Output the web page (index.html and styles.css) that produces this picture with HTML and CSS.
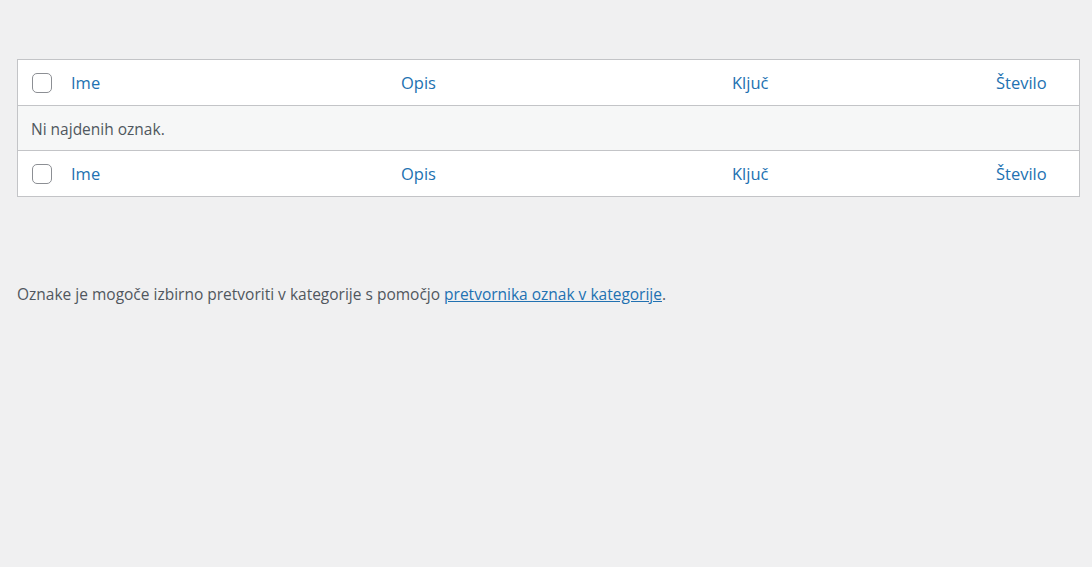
FILE: index.html
```html
<!DOCTYPE html>
<html lang="sl">
<head>
<meta charset="utf-8">
<title>Oznake</title>
<link rel="stylesheet" href="styles.css">
</head>
<body>
<div class="wrap">
  <div class="tags-table">
    <div class="row head">
      <div class="cell check"><span class="checkbox"></span></div>
      <div class="cell"><a href="#">Ime</a></div>
      <div class="cell"><a href="#">Opis</a></div>
      <div class="cell"><a href="#">Ključ</a></div>
      <div class="cell"><a href="#">Število</a></div>
    </div>
    <div class="row empty">
      <div class="cell full">Ni najdenih oznak.</div>
    </div>
    <div class="row foot">
      <div class="cell check"><span class="checkbox"></span></div>
      <div class="cell"><a href="#">Ime</a></div>
      <div class="cell"><a href="#">Opis</a></div>
      <div class="cell"><a href="#">Ključ</a></div>
      <div class="cell"><a href="#">Število</a></div>
    </div>
  </div>
  <p class="note">Oznake je mogoče izbirno pretvoriti v kategorije s pomočjo <a href="#">pretvornika oznak v kategorije</a>.</p>
</div>
</body>
</html>
```

FILE: styles.css
```css
html, body {
  margin: 0;
  padding: 0;
  background: #f0f0f1;
}

body {
  font-family: "Open Sans", "Noto Sans", sans-serif;
  font-size: 15.5px;
  color: #3c434a;
}

.wrap {
  padding: 59px 12px 0 17px;
}

.tags-table {
  background: #fff;
  border: 1px solid #c3c4c7;
}

.row {
  display: grid;
  grid-template-columns: 43px 330px 331px 264px 1fr;
  height: 45px;
  align-items: center;
  font-size: 16.5px;
}

.row.head {
  border-bottom: 1px solid #c3c4c7;
}

.row.empty {
  display: flex;
  height: 44px;
  background: #f6f7f7;
  border-bottom: 1px solid #c3c4c7;
  font-size: 15.5px;
}

.cell {
  padding: 0 10px;
  white-space: nowrap;
}

.cell a {
  color: #2271b1;
  text-decoration: none;
}

.cell.check {
  padding: 0 0 0 14px;
  display: flex;
  align-items: center;
}

.cell.full {
  padding-left: 13px;
  padding-top: 1px;
  color: #50575e;
}

.checkbox {
  display: block;
  box-sizing: border-box;
  width: 20px;
  height: 20px;
  border: 1px solid #8c8f94;
  border-radius: 5px;
  background: #fff;
}

.note {
  margin: 86px 0 0;
  color: #50575e;
  line-height: 1.5;
}

.note a {
  color: #2271b1;
  text-decoration: underline;
}
```
